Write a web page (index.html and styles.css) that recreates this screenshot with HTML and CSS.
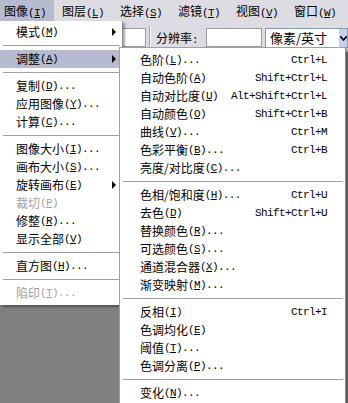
FILE: index.html
```html
<!DOCTYPE html>
<html lang="zh-CN">
<head>
    <meta charset="UTF-8">
    <title>图像 - 调整</title>
    <link rel="stylesheet" href="styles.css">
</head>
<body>

    <div class="menubar">
        <div class="mb-item active">图像<span class="k">(<u>I</u>)</span></div>
        <div class="mb-item">图层<span class="k">(<u>L</u>)</span></div>
        <div class="mb-item">选择<span class="k">(<u>S</u>)</span></div>
        <div class="mb-item">滤镜<span class="k">(<u>T</u>)</span></div>
        <div class="mb-item">视图<span class="k">(<u>V</u>)</span></div>
        <div class="mb-item">窗口<span class="k">(<u>W</u>)</span></div>
        <div class="mb-item">帮助<span class="k">(<u>H</u>)</span></div>
    </div>

    <div class="optbar">
        <div class="field field-a"></div>
        <div class="vsep"></div>
        <span class="opt-label">分辨率<span class="k">:</span></span>
        <div class="field field-b"></div>
        <div class="select">
            <span class="select-text">像素/英寸</span>
            <div class="select-btn">
                <svg width="7" height="5" viewBox="0 0 7 5"><path d="M0 0 L3.5 4 L7 0" fill="none" stroke="#000" stroke-width="1.6"/></svg>
            </div>
        </div>
    </div>

    <div class="workspace"></div>

    <!-- 图像菜单 -->
    <div class="menu main-menu">
        <div class="item has-sub">模式<span class="k">(<u>M</u>)</span></div>
        <div class="sep"></div>
        <div class="item has-sub active">调整<span class="k">(<u>A</u>)</span></div>
        <div class="sep"></div>
        <div class="item">复制<span class="k">(<u>D</u>)...</span></div>
        <div class="item">应用图像<span class="k">(<u>Y</u>)...</span></div>
        <div class="item">计算<span class="k">(<u>C</u>)...</span></div>
        <div class="sep"></div>
        <div class="item">图像大小<span class="k">(<u>I</u>)...</span></div>
        <div class="item">画布大小<span class="k">(<u>S</u>)...</span></div>
        <div class="item has-sub">旋转画布<span class="k">(<u>E</u>)</span></div>
        <div class="item disabled">裁切<span class="k">(<u>P</u>)</span></div>
        <div class="item">修整<span class="k">(<u>R</u>)...</span></div>
        <div class="item">显示全部<span class="k">(<u>V</u>)</span></div>
        <div class="sep"></div>
        <div class="item">直方图<span class="k">(<u>H</u>)...</span></div>
        <div class="sep"></div>
        <div class="item disabled">陷印<span class="k">(<u>T</u>)...</span></div>
    </div>

    <!-- 调整子菜单 -->
    <div class="menu sub-menu">
        <div class="item">色阶<span class="k">(<u>L</u>)...</span><span class="short">Ctrl+L</span></div>
        <div class="item">自动色阶<span class="k">(<u>A</u>)</span><span class="short">Shift+Ctrl+L</span></div>
        <div class="item">自动对比度<span class="k">(<u>U</u>)</span><span class="short">Alt+Shift+Ctrl+L</span></div>
        <div class="item">自动颜色<span class="k">(<u>O</u>)</span><span class="short">Shift+Ctrl+B</span></div>
        <div class="item">曲线<span class="k">(<u>V</u>)...</span><span class="short">Ctrl+M</span></div>
        <div class="item">色彩平衡<span class="k">(<u>B</u>)...</span><span class="short">Ctrl+B</span></div>
        <div class="item">亮度/对比度<span class="k">(<u>C</u>)...</span></div>
        <div class="sep"></div>
        <div class="item">色相/饱和度<span class="k">(<u>H</u>)...</span><span class="short">Ctrl+U</span></div>
        <div class="item">去色<span class="k">(<u>D</u>)</span><span class="short">Shift+Ctrl+U</span></div>
        <div class="item">替换颜色<span class="k">(<u>R</u>)...</span></div>
        <div class="item">可选颜色<span class="k">(<u>S</u>)...</span></div>
        <div class="item">通道混合器<span class="k">(<u>X</u>)...</span></div>
        <div class="item">渐变映射<span class="k">(<u>M</u>)...</span></div>
        <div class="sep"></div>
        <div class="item">反相<span class="k">(<u>I</u>)</span><span class="short">Ctrl+I</span></div>
        <div class="item">色调均化<span class="k">(<u>E</u>)</span></div>
        <div class="item">阈值<span class="k">(<u>T</u>)...</span></div>
        <div class="item">色调分离<span class="k">(<u>P</u>)...</span></div>
        <div class="sep"></div>
        <div class="item">变化<span class="k">(<u>N</u>)...</span></div>
    </div>

</body>
</html>
```

FILE: styles.css
```css
body {
    margin: 0;
    width: 348px;
    height: 403px;
    overflow: hidden;
    position: relative;
    font-family: "Noto Sans CJK SC", "Noto Sans", sans-serif;
    font-size: 12px;
    color: #000;
    background-color: #808080;
    display: flex;
    flex-direction: column;
}
.k {
    font-family: "Liberation Mono", monospace;
    font-size: 11px;
    letter-spacing: -0.6px;
}
u {
    text-underline-offset: 1px;
}

/* 菜单栏 */
.menubar {
    height: 21px;
    display: flex;
    gap: 4px;
    background-color: #dcdce2;
    white-space: nowrap;
}
.mb-item {
    width: 50px;
    flex: none;
    padding-left: 4px;
    line-height: 21px;
}
.mb-item.active {
    background-color: #b6bbcf;
}

/* 选项栏 */
.optbar {
    height: 31px;
    display: flex;
    align-items: flex-start;
    padding-top: 7px;
    box-sizing: border-box;
    background-color: #dcdce2;
    white-space: nowrap;
}
.field {
    height: 19px;
    background-color: #fff;
    border: 1px solid #9a9aa0;
    box-sizing: border-box;
    flex: none;
}
.field-a {
    margin-left: 95px;
    width: 51px;
}
.vsep {
    width: 1px;
    height: 22px;
    margin: -2px 3px 0 3px;
    background-color: #a0a0a8;
    border-right: 1px solid #fff;
}
.opt-label {
    margin-left: 2px;
    width: 50px;
    line-height: 20px;
}
.field-b {
    width: 56px;
}
.select {
    margin-left: 3px;
    height: 20px;
    flex: 1;
    display: flex;
    background-color: #fff;
    border: 1px solid #7f9db9;
    box-sizing: border-box;
}
.select-text {
    flex: 1;
    padding-left: 4px;
    line-height: 18px;
    font-size: 13px;
}
.select-btn {
    width: 8px;
    display: flex;
    align-items: center;
    justify-content: center;
    background-color: #c8d0e8;
}

.workspace {
    flex: 1;
}

/* 下拉菜单 */
.menu {
    position: absolute;
    background-color: #fff;
    white-space: nowrap;
}
.main-menu {
    left: 0;
    top: 21px;
    width: 122px;
    padding: 2px 0 3px;
    border-right: 1px solid #8c8c8c;
    box-shadow: 2px 2px 2px rgba(0,0,0,0.35);
}
.sub-menu {
    left: 119px;
    top: 47px;
    width: 225px;
    padding-top: 3px;
    height: 400px;
    border-left: 1px solid #a0a0a0;
    border-top: 1px solid #a0a0a0;
    border-right: 1px solid #8c8c8c;
    box-shadow: 2px 2px 2px rgba(0,0,0,0.35);
}
.item {
    position: relative;
    height: 18px;
    line-height: 18px;
    padding-left: 16px;
    display: flex;
}
.sub-menu .item {
    padding-left: 20px;
    padding-right: 18px;
}
.item.active {
    background-color: #b6bbcf;
}
.item.disabled {
    color: #a0a0a0;
}
.item.has-sub::after {
    content: '';
    position: absolute;
    right: 6px;
    top: 5px;
    border-left: 4px solid #000;
    border-top: 4px solid transparent;
    border-bottom: 4px solid transparent;
}
.short {
    margin-left: auto;
    font-family: "Liberation Mono", monospace;
    font-size: 11px;
    letter-spacing: -0.6px;
}
.sep {
    height: 1px;
    margin: 4px 2px 4px 3px;
    background-color: #a0a0a0;
}
```
